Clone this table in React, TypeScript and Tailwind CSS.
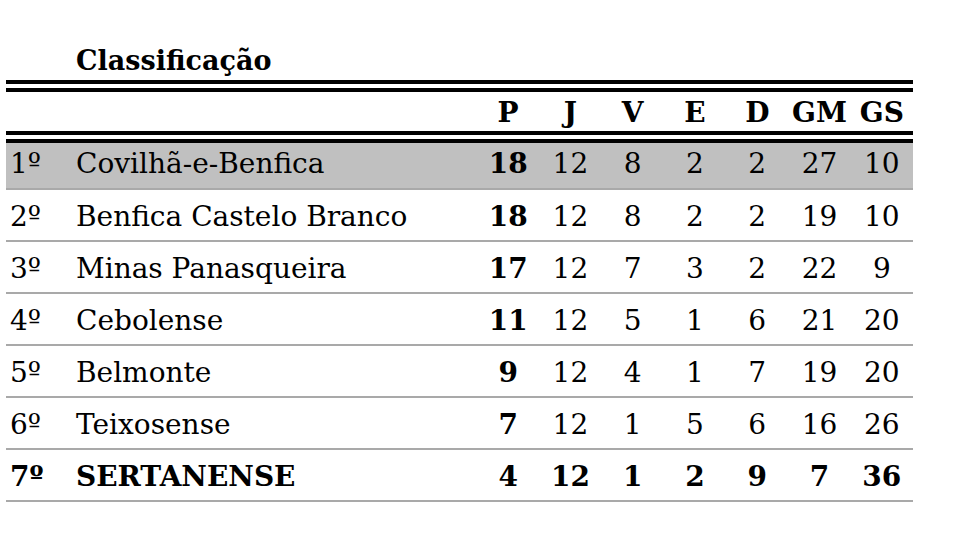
const rows = [
  { pos: "1º", team: "Covilhã-e-Benfica", p: 18, j: 12, v: 8, e: 2, d: 2, gm: 27, gs: 10 },
  { pos: "2º", team: "Benfica Castelo Branco", p: 18, j: 12, v: 8, e: 2, d: 2, gm: 19, gs: 10 },
  { pos: "3º", team: "Minas Panasqueira", p: 17, j: 12, v: 7, e: 3, d: 2, gm: 22, gs: 9 },
  { pos: "4º", team: "Cebolense", p: 11, j: 12, v: 5, e: 1, d: 6, gm: 21, gs: 20 },
  { pos: "5º", team: "Belmonte", p: 9, j: 12, v: 4, e: 1, d: 7, gm: 19, gs: 20 },
  { pos: "6º", team: "Teixosense", p: 7, j: 12, v: 1, e: 5, d: 6, gm: 16, gs: 26 },
  { pos: "7º", team: "SERTANENSE", p: 4, j: 12, v: 1, e: 2, d: 9, gm: 7, gs: 36 },
];

const cols = "grid grid-cols-[70px_401px_repeat(7,1fr)] items-center";

export default function App() {
  return (
    <div className="min-h-screen bg-white pl-[6px] pt-[36px] text-black font-['DejaVu_Serif','Liberation_Serif',serif]">
      <div className="w-[907px]">
        {/* title */}
        <div className="h-[44px] pl-[70px] pt-[3px] text-[27px] font-bold leading-[44px]">Classificação</div>

        {/* top double rule */}
        <div className="h-[4px] bg-black" />
        <div className="h-[4px]" />
        <div className="h-[4px] bg-black" />

        {/* header */}
        <div className={`${cols} h-[39px] pb-[4px] text-[28px] font-bold`}>
          <span />
          <span />
          <span className="text-center">P</span>
          <span className="text-center">J</span>
          <span className="text-center">V</span>
          <span className="text-center">E</span>
          <span className="text-center">D</span>
          <span className="text-center">GM</span>
          <span className="text-center">GS</span>
        </div>

        <div className="h-[4px] bg-black" />
        <div className="h-[4px]" />
        <div className="h-[4px] bg-black" />

        {rows.map((r, i) => {
          const first = i === 0;
          const last = i === rows.length - 1;
          return (
            <div
              key={r.pos}
              className={`${cols} border-b-2 border-[#a9a9a9] text-[28px] ${first ? "h-[47px] bg-[#c0c0c0] pb-[5px]" : "h-[52px] pt-[3px]"} ${last ? "font-bold" : ""}`}
            >
              <span className="pl-[4px]">{r.pos}</span>
              <span className="whitespace-nowrap">{r.team}</span>
              <span className="text-center font-bold">{r.p}</span>
              <span className="text-center">{r.j}</span>
              <span className="text-center">{r.v}</span>
              <span className="text-center">{r.e}</span>
              <span className="text-center">{r.d}</span>
              <span className="text-center">{r.gm}</span>
              <span className="text-center">{r.gs}</span>
            </div>
          );
        })}
      </div>
    </div>
  );
}
